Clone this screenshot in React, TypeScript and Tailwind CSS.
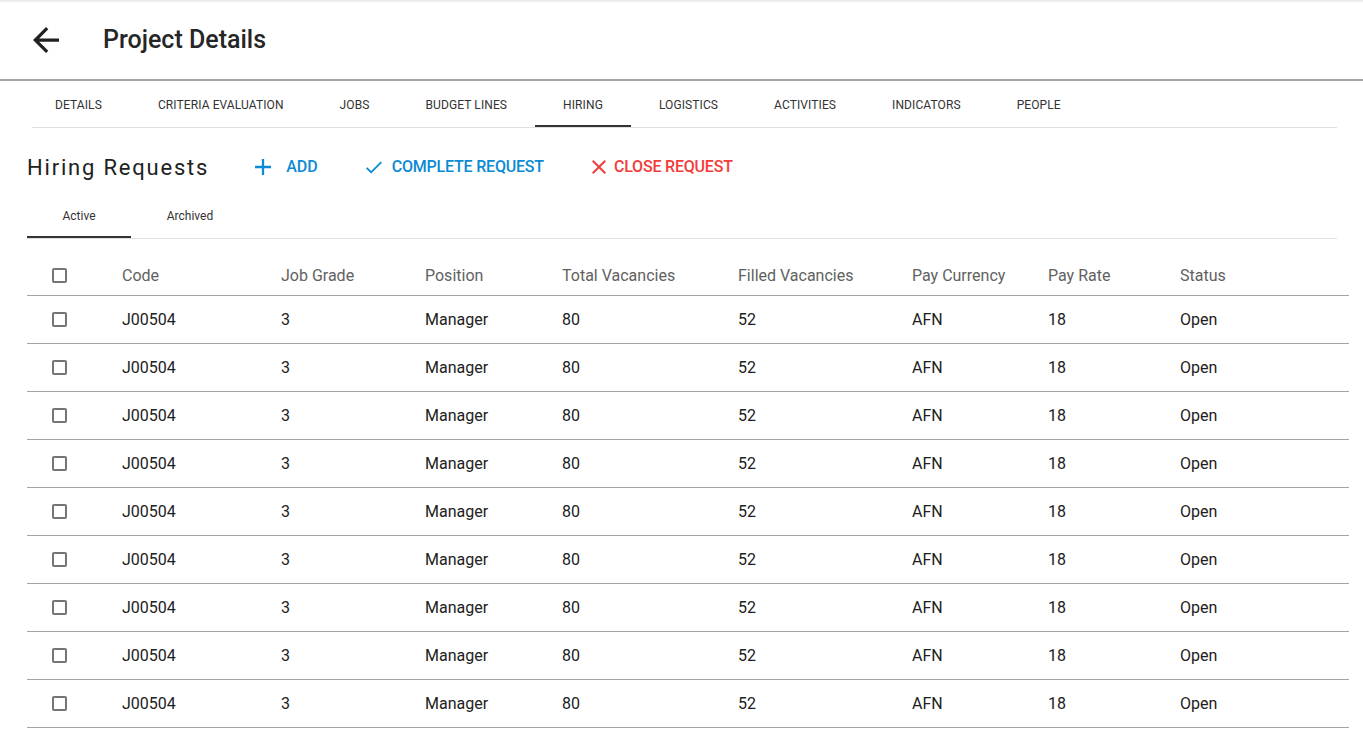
import React from "react";

const tabs = [
  "Details",
  "Criteria Evaluation",
  "Jobs",
  "Budget Lines",
  "Hiring",
  "Logistics",
  "Activities",
  "Indicators",
  "People",
];

const columns = [
  "Code",
  "Job Grade",
  "Position",
  "Total Vacancies",
  "Filled Vacancies",
  "Pay Currency",
  "Pay Rate",
  "Status",
];

type Request = {
  code: string;
  grade: string;
  position: string;
  total: number;
  filled: number;
  currency: string;
  rate: number;
  status: string;
};

const rows: Request[] = Array.from({ length: 9 }, () => ({
  code: "J00504",
  grade: "3",
  position: "Manager",
  total: 80,
  filled: 52,
  currency: "AFN",
  rate: 18,
  status: "Open",
}));

const gridCols =
  "grid grid-cols-[95px_159px_144px_137px_176px_174px_136px_132px_1fr] items-center";

function Checkbox() {
  return (
    <span className="block h-[15px] w-[15px] rounded-[2px] border-2 border-[#757575]" />
  );
}

export default function App() {
  return (
    <div
      className="min-h-screen bg-white text-[#212121]"
      style={{ fontFamily: "Roboto, 'Liberation Sans', sans-serif" }}
    >
      <div className="h-[3px] bg-gradient-to-b from-[#e6e6e6] to-white" />

      {/* header */}
      <header className="flex h-[78px] items-center border-b-2 border-[#a6a6a6] pb-[3px]">
        <button className="ml-[33px] flex items-center">
          <svg width="26" height="26" viewBox="4 4 16 16" fill="#212121">
            <path d="M20 11H7.83l5.59-5.59L12 4l-8 8 8 8 1.41-1.41L7.83 13H20v-2z" />
          </svg>
        </button>
        <h1 className="ml-[44px] text-[25px] font-medium text-[#262626]">Project Details</h1>
      </header>

      {/* project tabs */}
      <nav className="flex pl-[27px]">
        {tabs.map((t) => (
          <div
            key={t}
            className={`flex h-[46px] items-center px-[28px] pt-[3px] text-[12px] font-normal uppercase tracking-[0.1px] text-[#333] ${
              t === "Hiring" ? "border-b-2 border-[#333]" : "border-b-2 border-transparent"
            }`}
          >
            {t}
          </div>
        ))}
      </nav>
      <div className="ml-[32px] mr-[26px] h-px bg-[#e0e0e0]" />

      {/* section heading */}
      <div className="mt-[17px] flex h-[44px] items-center pl-[27px]">
        <h2 className="text-[22px] font-normal tracking-[1.8px] text-[#212121]">
          Hiring Requests
        </h2>
        <button className="ml-[46px] flex items-center text-[16px] font-medium text-[#0b8bd3]">
          <svg width="16" height="16" viewBox="5 5 14 14" fill="currentColor">
            <path d="M19 13h-6v6h-2v-6H5v-2h6V5h2v6h6v2z" />
          </svg>
          <span className="ml-[15px]">ADD</span>
        </button>
        <button className="ml-[48px] flex items-center text-[16px] font-medium text-[#0b8bd3]">
          <svg width="16" height="13" viewBox="3.4 5.6 17.6 13.4" fill="currentColor">
            <path d="M9 16.17L4.83 12l-1.42 1.41L9 19 21 7l-1.41-1.41z" />
          </svg>
          <span className="ml-[10px] tracking-[-0.2px]">COMPLETE REQUEST</span>
        </button>
        <button className="ml-[48px] flex items-center text-[16px] font-medium text-[#f23c3c]">
          <svg width="14" height="14" viewBox="5 5 14 14" fill="currentColor">
            <path d="M19 6.41L17.59 5 12 10.59 6.41 5 5 6.41 10.59 12 5 17.59 6.41 19 12 13.41 17.59 19 19 17.59 13.41 12z" />
          </svg>
          <span className="ml-[8px] tracking-[-0.2px]">CLOSE REQUEST</span>
        </button>
      </div>

      {/* active / archived */}
      <div className="mt-[4px] ml-[27px] mr-[26px] flex border-b border-[#e0e0e0]">
        <div className="flex h-[45px] w-[104px] items-center justify-center border-b-2 border-[#333] pt-[3px] text-[12px] text-[#333]">
          Active
        </div>
        <div className="flex h-[45px] w-[118px] items-center justify-center border-b-2 border-transparent pt-[3px] text-[12px] text-[#333]">
          Archived
        </div>
      </div>

      {/* table */}
      <div className="ml-[27px] mr-[14px] mt-[13px]">
        <div className={`${gridCols} h-[44px] border-b border-[#a3a3a3] pt-[4px] text-[16px] text-[#616161]`}>
          <div className="pl-[25px]">
            <Checkbox />
          </div>
          {columns.map((c) => (
            <div key={c}>{c}</div>
          ))}
        </div>
        {rows.map((r, i) => (
          <div
            key={i}
            className={`${gridCols} h-[48px] border-b border-[#a3a3a3] text-[16px] text-[#212121]`}
          >
            <div className="pl-[25px]">
              <Checkbox />
            </div>
            <div>{r.code}</div>
            <div>{r.grade}</div>
            <div>{r.position}</div>
            <div>{r.total}</div>
            <div>{r.filled}</div>
            <div>{r.currency}</div>
            <div>{r.rate}</div>
            <div>{r.status}</div>
          </div>
        ))}
      </div>
    </div>
  );
}
